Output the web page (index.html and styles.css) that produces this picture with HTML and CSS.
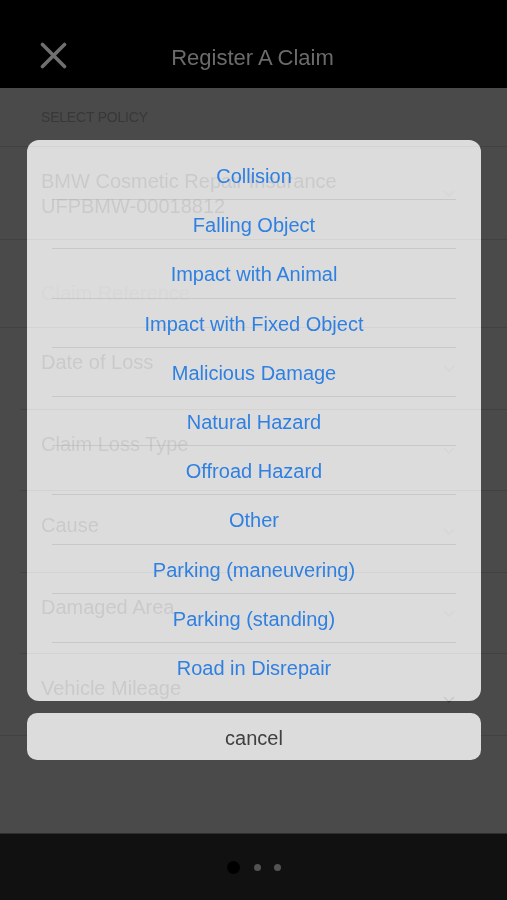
FILE: index.html
```html
<!DOCTYPE html>
<html lang="en">
<head>
<meta charset="utf-8">
<title>Register A Claim</title>
<link rel="stylesheet" href="styles.css">
</head>
<body>
<div class="screen">
  <header class="navbar">
    <button class="close-btn" aria-label="Close">
      <svg width="27" height="27" viewBox="0 0 27 27"><path d="M2.5 2.5 L24.5 24.5 M24.5 2.5 L2.5 24.5" stroke="currentColor" stroke-width="3.6" stroke-linecap="round" fill="none"/></svg>
    </button>
    <h1 class="title">Register A Claim</h1>
    <span class="nav-spacer"></span>
  </header>

  <main class="form">
    <div class="section-head">SELECT POLICY</div>
    <div class="cell cell-policy">
      <div class="cell-text">BMW Cosmetic Repair Insurance<br>UFPBMW-00018812</div>
      <svg class="chev" width="12" height="8" viewBox="0 0 12 8"><path d="M1 1 L6 6 L11 1" stroke="currentColor" stroke-width="1.5" fill="none"/></svg>
    </div>
    <div class="cell cell-ref">
      <div class="cell-text faint">Claim Reference</div>
    </div>
    <div class="cell inset">
      <div class="cell-text">Date of Loss</div>
      <svg class="chev" width="12" height="8" viewBox="0 0 12 8"><path d="M1 1 L6 6 L11 1" stroke="currentColor" stroke-width="1.5" fill="none"/></svg>
    </div>
    <div class="cell inset short">
      <div class="cell-text">Claim Loss Type</div>
      <svg class="chev" width="12" height="8" viewBox="0 0 12 8"><path d="M1 1 L6 6 L11 1" stroke="currentColor" stroke-width="1.5" fill="none"/></svg>
    </div>
    <div class="cell inset">
      <div class="cell-text">Cause</div>
      <svg class="chev" width="12" height="8" viewBox="0 0 12 8"><path d="M1 1 L6 6 L11 1" stroke="currentColor" stroke-width="1.5" fill="none"/></svg>
    </div>
    <div class="cell inset short">
      <div class="cell-text">Damaged Area</div>
      <svg class="chev" width="12" height="8" viewBox="0 0 12 8"><path d="M1 1 L6 6 L11 1" stroke="currentColor" stroke-width="1.5" fill="none"/></svg>
    </div>
    <div class="cell">
      <div class="cell-text">Vehicle Mileage</div>
      <svg class="chev chev-low" width="12" height="8" viewBox="0 0 12 8"><path d="M1 1 L6 6 L11 1" stroke="currentColor" stroke-width="1.5" fill="none"/></svg>
    </div>
  </main>

  <footer class="pager">
    <span class="dot dot-active"></span>
    <span class="dot"></span>
    <span class="dot"></span>
  </footer>

  <div class="overlay">
    <ul class="sheet">
      <li class="option"><span>Collision</span></li>
      <li class="option"><span>Falling Object</span></li>
      <li class="option"><span>Impact with Animal</span></li>
      <li class="option"><span>Impact with Fixed Object</span></li>
      <li class="option"><span>Malicious Damage</span></li>
      <li class="option"><span>Natural Hazard</span></li>
      <li class="option"><span>Offroad Hazard</span></li>
      <li class="option"><span>Other</span></li>
      <li class="option"><span>Parking (maneuvering)</span></li>
      <li class="option"><span>Parking (standing)</span></li>
      <li class="option"><span>Road in Disrepair</span></li>
    </ul>
    <button class="cancel">cancel</button>
  </div>
</div>
</body>
</html>
```

FILE: styles.css
```css
* {
  box-sizing: border-box;
}

html, body {
  margin: 0;
  padding: 0;
  background: #4a4a4a;
}

body {
  font-family: "Liberation Sans", Arial, "Noto Sans", sans-serif;
}

.screen {
  position: relative;
  width: 507px;
  height: 900px;
  overflow: hidden;
  display: flex;
  flex-direction: column;
  background: #4a4a4a;
}

/* ---------- nav bar ---------- */
.navbar {
  height: 88px;
  flex: none;
  background: #000;
  display: grid;
  grid-template-columns: 1fr auto 1fr;
  align-items: center;
  padding: 28px 0 0 40px;
}

.close-btn {
  justify-self: start;
  width: 27px;
  height: 27px;
  padding: 0;
  margin: -6px 0 0 0;
  border: 0;
  background: none;
  color: #6f6f6f;
  display: flex;
}

.title {
  margin: 0;
  font-size: 22px;
  font-weight: normal;
  color: #6b6b6b;
  line-height: 30px;
  transform: translateX(-21px);
}

/* ---------- form (dimmed background) ---------- */
.form {
  flex: 1;
  display: flex;
  flex-direction: column;
  color: #3a3a3a;
}

.section-head {
  height: 59px;
  padding: 20px 0 0 41px;
  font-size: 14px;
  line-height: 18px;
  letter-spacing: -0.2px;
  color: #383838;
  border-bottom: 1px solid #414141;
}

.cell {
  position: relative;
  height: 82px;
  padding: 22px 0 0 41px;
  border-bottom: 1px solid #414141;
}

.cell.short {
  height: 81px;
}

.cell.inset {
  border-bottom: 0;
}

.cell.inset::after {
  content: "";
  position: absolute;
  left: 20px;
  right: 0;
  bottom: 0;
  border-bottom: 1px solid #414141;
}

.cell-policy {
  height: 93px;
  padding-top: 22px;
}

.cell-ref {
  height: 88px;
  padding-top: 41px;
}

.cell-text {
  font-size: 20px;
  line-height: 25px;
  color: #393939;
}

.cell-text.faint {
  color: #464646;
}

.chev {
  position: absolute;
  right: 52px;
  top: 37px;
  color: #444444;
}

.cell-policy .chev {
  top: 43px;
}

.chev-low {
  top: 42px;
  color: #383838;
}

/* ---------- pager ---------- */
.pager {
  height: 67px;
  flex: none;
  background: #111;
  border-top: 1px solid #2e2e2e;
  display: flex;
  align-items: center;
  justify-content: center;
  gap: 13px;
}

.dot {
  width: 7px;
  height: 7px;
  border-radius: 50%;
  background: #535353;
}

.dot-active {
  width: 13px;
  height: 13px;
  background: #000;
  margin-right: 1px;
}

/* ---------- action sheet overlay ---------- */
.overlay {
  position: absolute;
  inset: 0;
  display: flex;
  flex-direction: column;
  align-items: stretch;
  gap: 12px;
  padding: 140px 26px 0 27px;
}

.sheet {
  list-style: none;
  margin: 0;
  height: 561px;
  padding: 11px 0 9px;
  border-radius: 12px;
  background: rgba(221, 221, 221, 0.05);
  -webkit-backdrop-filter: blur(0.6px) contrast(0.51) brightness(2.21);
  backdrop-filter: blur(0.6px) contrast(0.51) brightness(2.21);
}

.option {
  height: 49.2px;
  margin: 0 25px;
  border-bottom: 1px solid rgba(160, 160, 160, 0.35);
  display: flex;
  align-items: center;
  justify-content: center;
  padding-top: 3px;
  font-size: 20px;
  color: #2f80e1;
}

.option:last-child {
  border-bottom: 0;
}

.cancel {
  height: 47px;
  border: 0;
  border-radius: 10px;
  background: #dcdcdc;
  font-family: "Liberation Sans", Arial, sans-serif;
  font-size: 20px;
  color: #404040;
  padding: 3px 0 0;
}
```
